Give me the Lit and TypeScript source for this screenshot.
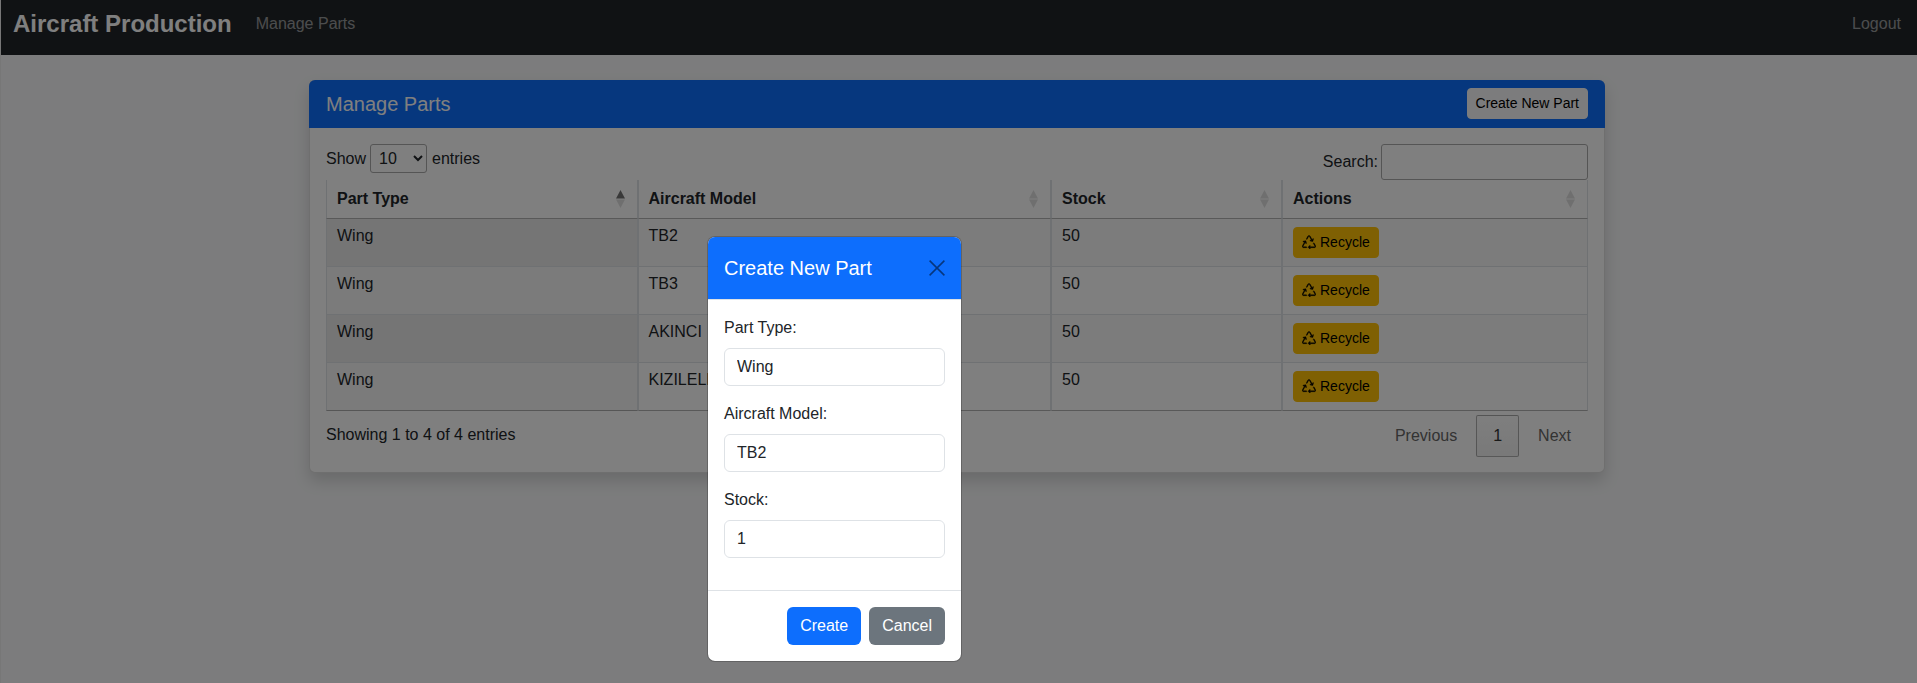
import { LitElement, html, css, svg } from "lit";
import { customElement } from "lit/decorators.js";

const RECYCLE = "M9.302 1.256a1.5 1.5 0 0 0-2.604 0l-1.704 2.98a.5.5 0 0 0 .869.497l1.703-2.981a.5.5 0 0 1 .868 0l2.54 4.444-1.256-.337a.5.5 0 1 0-.26.966l2.415.647a.5.5 0 0 0 .613-.353l.647-2.415a.5.5 0 1 0-.966-.259l-.333 1.242-2.532-4.431zM2.973 7.773l-1.255.337a.5.5 0 1 1-.26-.966l2.416-.647a.5.5 0 0 1 .612.353l.647 2.415a.5.5 0 0 1-.966.259l-.333-1.242-2.545 4.454a.5.5 0 0 0 .434.748H5a.5.5 0 0 1 0 1H1.723A1.5 1.5 0 0 1 .421 12.24l2.552-4.467zm10.89 1.463a.5.5 0 1 0-.868.496l1.716 3.004a.5.5 0 0 1-.434.748h-5.57l.647-.646a.5.5 0 1 0-.708-.707l-1.5 1.5a.498.498 0 0 0 0 .707l1.5 1.5a.5.5 0 1 0 .708-.707l-.647-.647h5.57a1.5 1.5 0 0 0 1.302-2.244l-1.716-3.004z";

const COLUMNS = [
  { title: "Part Type", width: 311.5, sorted: true },
  { title: "Aircraft Model", width: 413.5, sorted: false },
  { title: "Stock", width: 231, sorted: false },
  { title: "Actions", width: 306, sorted: false },
];

const ROWS = [
  { part: "Wing", model: "TB2", stock: 50 },
  { part: "Wing", model: "TB3", stock: 50 },
  { part: "Wing", model: "AKINCI", stock: 50 },
  { part: "Wing", model: "KIZILELMA", stock: 50 },
];

const FIELDS = [
  { label: "Part Type:", value: "Wing" },
  { label: "Aircraft Model:", value: "TB2" },
  { label: "Stock:", value: "1" },
];

@customElement("app-root")
export class AppRoot extends LitElement {
  static styles = css`
    :host {
      display: block;
      position: relative;
      height: 683px;
      overflow: hidden;
      box-sizing: border-box;
      border-left: 1px solid #777;
      background: #f8f9fa;
      color: #212529;
      font: 16px/24px "Liberation Sans", Arial, sans-serif;
    }
    * {
      box-sizing: border-box;
    }

    .navbar {
      display: flex;
      align-items: center;
      height: 55px;
      padding: 0 16px 7px 12px;
      background: #212529;
    }
    .brand {
      margin-right: 24px;
      font-size: 24px;
      font-weight: 700;
      color: #fff;
    }
    .nav-link {
      color: rgba(255, 255, 255, 0.55);
    }
    .spacer {
      flex: 1;
    }

    .card {
      width: 1296px;
      margin: 25px 0 0 308px;
      border-radius: 6px;
      overflow: hidden;
      background: #fff;
      box-shadow: 0 8px 16px rgba(0, 0, 0, 0.15), inset 0 0 0 1px rgba(0, 0, 0, 0.125);
    }
    .card-header {
      display: flex;
      align-items: center;
      justify-content: space-between;
      height: 48px;
      padding: 0 17px 1px;
      background: #0d6efd;
      color: #fff;
      font-size: 20px;
    }
    .btn-light {
      height: 31px;
      padding: 0 8px 2px;
      border: 1px solid #f8f9fa;
      border-radius: 4px;
      background: #f8f9fa;
      color: #000;
      font: 14px "Liberation Sans", Arial, sans-serif;
    }
    .card-body {
      padding: 16px 17px;
    }

    .controls {
      display: flex;
      justify-content: space-between;
      height: 36px;
    }
    .length {
      display: flex;
      align-items: center;
      gap: 4px;
      height: 29px;
    }
    .length select {
      width: 57px;
      height: 29px;
      margin-right: 1px;
      padding: 4px;
      border: 1px solid #aaa;
      border-radius: 3px;
      background: transparent;
      color: #212529;
      font: 16px "Liberation Sans", Arial, sans-serif;
    }
    .search {
      display: flex;
      align-items: center;
      gap: 3px;
    }
    .search input {
      width: 207px;
      height: 36px;
      border: 1px solid #aaa;
      border-radius: 3px;
      background: transparent;
    }

    table {
      width: 1262px;
      table-layout: fixed;
      border-collapse: separate;
      border-spacing: 0;
    }
    th,
    td {
      padding: 5px 10px 3px;
      border-left: 1px solid #dee2e6;
      border-right: 1px solid #dee2e6;
      border-bottom: 1px solid #dee2e6;
      text-align: left;
      vertical-align: top;
    }
    th {
      padding: 7px 12px 7px 10px;
      border-bottom-color: rgba(0, 0, 0, 0.3);
      font-weight: 700;
    }
    th div {
      display: flex;
      align-items: center;
      justify-content: space-between;
    }
    th svg {
      display: block;
    }
    tbody tr:last-child td {
      border-bottom-color: rgba(0, 0, 0, 0.3);
    }
    tbody tr.odd td {
      background: rgba(0, 0, 0, 0.023);
    }
    tbody tr.odd td.sorted {
      background: rgba(0, 0, 0, 0.08);
    }
    tbody tr.even td.sorted {
      background: rgba(0, 0, 0, 0.03);
    }
    .recycle {
      display: flex;
      align-items: center;
      gap: 4px;
      width: 86px;
      height: 31px;
      margin: 3px 0 5px;
      padding: 0 0 2px 8px;
      border: 1px solid #ffc107;
      border-radius: 4px;
      background: #ffc107;
      color: #000;
      font: 14px "Liberation Sans", Arial, sans-serif;
    }
    .recycle svg {
      fill: currentColor;
      stroke: currentColor;
      stroke-width: 0.45;
      flex: none;
    }

    .footer {
      display: flex;
      justify-content: space-between;
    }
    .info {
      padding-top: 12px;
    }
    .pages {
      display: flex;
      gap: 2px;
      padding-top: 4px;
    }
    .page {
      padding: 8px 16px;
      border: 1px solid transparent;
      border-radius: 2px;
      color: #666;
    }
    .page.current {
      border-color: rgba(0, 0, 0, 0.3);
      background: linear-gradient(to bottom, rgba(230, 230, 230, 0.05), rgba(0, 0, 0, 0.05));
      color: #333;
    }

    .backdrop {
      position: absolute;
      inset: 0 0 0 -1px;
      background: rgba(0, 0, 0, 0.5);
    }
    .modal {
      position: absolute;
      left: 706px;
      top: 236px;
      width: 255px;
      border: 1px solid rgba(0, 0, 0, 0.2);
      border-radius: 8px;
      background: #fff;
      background-clip: padding-box;
      overflow: hidden;
    }
    .modal-header {
      display: flex;
      align-items: center;
      justify-content: space-between;
      height: 63px;
      padding: 0 16px;
      border-bottom: 1px solid #dee2e6;
      background: #0d6efd;
      color: #fff;
      font-size: 20px;
    }
    .close {
      display: block;
      opacity: 0.5;
    }
    .modal-body {
      padding: 16px;
    }
    .field {
      margin-bottom: 16px;
    }
    .field label {
      display: block;
      margin-bottom: 8px;
    }
    .field input {
      display: block;
      width: 100%;
      height: 38px;
      padding: 6px 12px;
      border: 1px solid #dee2e6;
      border-radius: 6px;
      color: #212529;
      font: 16px "Liberation Sans", Arial, sans-serif;
    }
    .modal-footer {
      display: flex;
      justify-content: flex-end;
      gap: 8px;
      padding: 16px;
      border-top: 1px solid #dee2e6;
    }
    .btn {
      height: 38px;
      padding: 0 12px;
      border: 1px solid transparent;
      border-radius: 6px;
      color: #fff;
      font: 16px "Liberation Sans", Arial, sans-serif;
    }
    .btn-primary {
      background: #0d6efd;
    }
    .btn-secondary {
      background: #6c757d;
    }
  `;

  sortIcon(sorted: boolean) {
    return html`<svg width="9" height="18" viewBox="0 0 9 18">
      ${svg`<polygon points="4.5,0 9,8.5 0,8.5" fill-opacity=${sorted ? 0.55 : 0.125}></polygon>`}
      ${svg`<polygon points="0,9.5 9,9.5 4.5,18" fill-opacity="0.125"></polygon>`}
    </svg>`;
  }

  renderTable() {
    return html`
      <table>
        <colgroup>
          ${COLUMNS.map((c) => html`<col style="width:${c.width}px" />`)}
        </colgroup>
        <thead>
          <tr>
            ${COLUMNS.map((c) => html`<th><div>${c.title}${this.sortIcon(c.sorted)}</div></th>`)}
          </tr>
        </thead>
        <tbody>
          ${ROWS.map(
            (r, i) => html`
              <tr class=${i % 2 === 0 ? "odd" : "even"}>
                <td class="sorted">${r.part}</td>
                <td>${r.model}</td>
                <td>${r.stock}</td>
                <td>
                  <button class="recycle">
                    <svg width="14" height="14" viewBox="0 0 16 16"><path d=${RECYCLE}></path></svg>
                    Recycle
                  </button>
                </td>
              </tr>
            `
          )}
        </tbody>
      </table>
    `;
  }

  render() {
    return html`
      <nav class="navbar">
        <span class="brand">Aircraft Production</span>
        <span class="nav-link">Manage Parts</span>
        <span class="spacer"></span>
        <span class="nav-link">Logout</span>
      </nav>

      <section class="card">
        <header class="card-header">
          <span>Manage Parts</span>
          <button class="btn-light">Create New Part</button>
        </header>
        <div class="card-body">
          <div class="controls">
            <div class="length">
              Show
              <select><option>10</option></select>
              entries
            </div>
            <label class="search">Search:<input type="search" /></label>
          </div>
          ${this.renderTable()}
          <div class="footer">
            <div class="info">Showing 1 to 4 of 4 entries</div>
            <div class="pages">
              <span class="page">Previous</span>
              <span class="page current">1</span>
              <span class="page">Next</span>
            </div>
          </div>
        </div>
      </section>

      <div class="backdrop"></div>
      <div class="modal">
        <div class="modal-header">
          <span>Create New Part</span>
          <svg class="close" width="16" height="16" viewBox="0 0 16 16">
            <path d="M.6.6l14.8 14.8M15.4.6L.6 15.4" stroke="#000" stroke-width="1.5" fill="none"></path>
          </svg>
        </div>
        <div class="modal-body">
          ${FIELDS.map(
            (f) => html`
              <div class="field">
                <label>${f.label}</label>
                <input .value=${f.value} />
              </div>
            `
          )}
        </div>
        <div class="modal-footer">
          <button class="btn btn-primary">Create</button>
          <button class="btn btn-secondary">Cancel</button>
        </div>
      </div>
    `;
  }
}
